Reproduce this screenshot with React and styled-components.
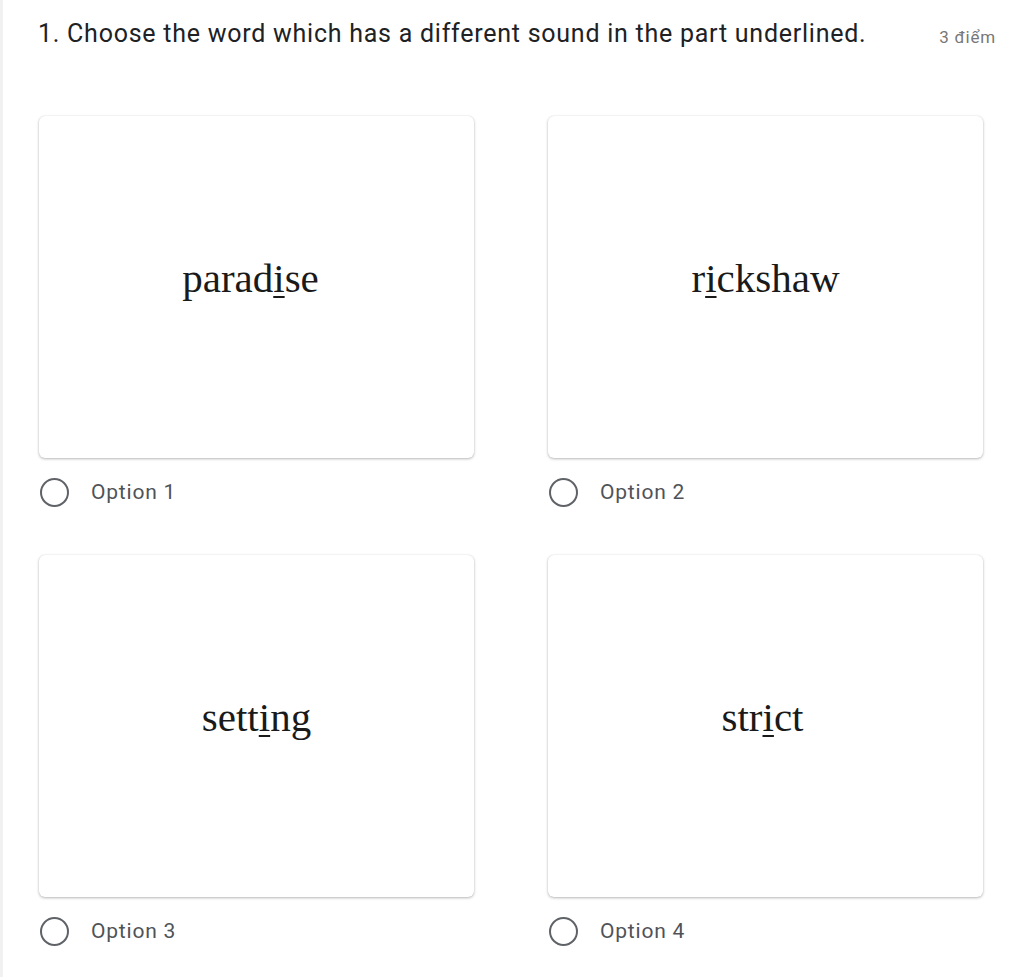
import React from "react";
import styled, { createGlobalStyle } from "styled-components";

const GlobalStyle = createGlobalStyle`
  html, body {
    margin: 0;
    padding: 0;
    background: #ffffff;
  }
`;

const options = [
  { before: "parad", mark: "i", after: "se", label: "Option 1", shift: 12 },
  { before: "r", mark: "i", after: "ckshaw", label: "Option 2", shift: 0 },
  { before: "sett", mark: "i", after: "ng", label: "Option 3", shift: 0 },
  { before: "str", mark: "i", after: "ct", label: "Option 4", shift: 6 },
];

const App = () => {
  return (
    <>
      <GlobalStyle />
      <Page>
        <Header>
          <Title>1. Choose the word which has a different sound in the part underlined.</Title>
          <Points>3 điểm</Points>
        </Header>
        <Grid>
          {options.map((o) => (
            <Cell key={o.label}>
              <Card>
                <Word $shift={o.shift}>
                  {o.before}
                  <Marked>{o.mark}</Marked>
                  {o.after}
                </Word>
              </Card>
              <OptionRow>
                <Radio />
                <OptionLabel>{o.label}</OptionLabel>
              </OptionRow>
            </Cell>
          ))}
        </Grid>
      </Page>
    </>
  );
};

const Page = styled.div`
  min-height: 977px;
  box-sizing: border-box;
  border-left: 3px solid #f1f1f1;
  padding: 19px 0 0 35px;
`;

const Header = styled.div`
  display: flex;
  align-items: flex-start;
  width: 958px;
`;

const Title = styled.div`
  flex: 1;
  font-family: Roboto, "Liberation Sans", sans-serif;
  font-size: 25px;
  line-height: 30px;
  color: #202124;
  letter-spacing: 0.75px;
  white-space: nowrap;
`;

const Points = styled.div`
  font-family: Roboto, "Liberation Sans", sans-serif;
  font-size: 17px;
  line-height: 30px;
  letter-spacing: 0.8px;
  color: #777777;
  padding-top: 3px;
`;

const Grid = styled.div`
  display: grid;
  grid-template-columns: 435px 435px;
  column-gap: 74px;
  row-gap: 48px;
  margin-top: 64px;
  padding-left: 1px;
`;

const Cell = styled.div`
  display: flex;
  flex-direction: column;
`;

const Card = styled.div`
  height: 342px;
  border-radius: 6px;
  background: #ffffff;
  box-shadow: 0 1px 3px rgba(0, 0, 0, 0.28), 0 0 1px rgba(0, 0, 0, 0.12);
  display: flex;
  align-items: center;
  justify-content: center;
`;

const Word = styled.div`
  font-family: "Liberation Serif", "Times New Roman", serif;
  font-size: 41px;
  color: #1a1a1a;
  margin: -18px ${(p) => p.$shift}px 0 0;
`;

const Marked = styled.span`
  text-decoration: underline;
  text-decoration-thickness: 2px;
  text-underline-offset: 4px;
`;

const OptionRow = styled.div`
  display: flex;
  align-items: center;
  margin-top: 19px;
  height: 30px;
`;

const Radio = styled.span`
  width: 25px;
  height: 25px;
  border: 2.5px solid #5f6368;
  border-radius: 50%;
  margin-left: 1px;
`;

const OptionLabel = styled.span`
  font-family: Roboto, "Liberation Sans", sans-serif;
  font-size: 21px;
  font-weight: 400;
  letter-spacing: 0.8px;
  color: #4f5358;
  margin-left: 22px;
`;

export default App;
